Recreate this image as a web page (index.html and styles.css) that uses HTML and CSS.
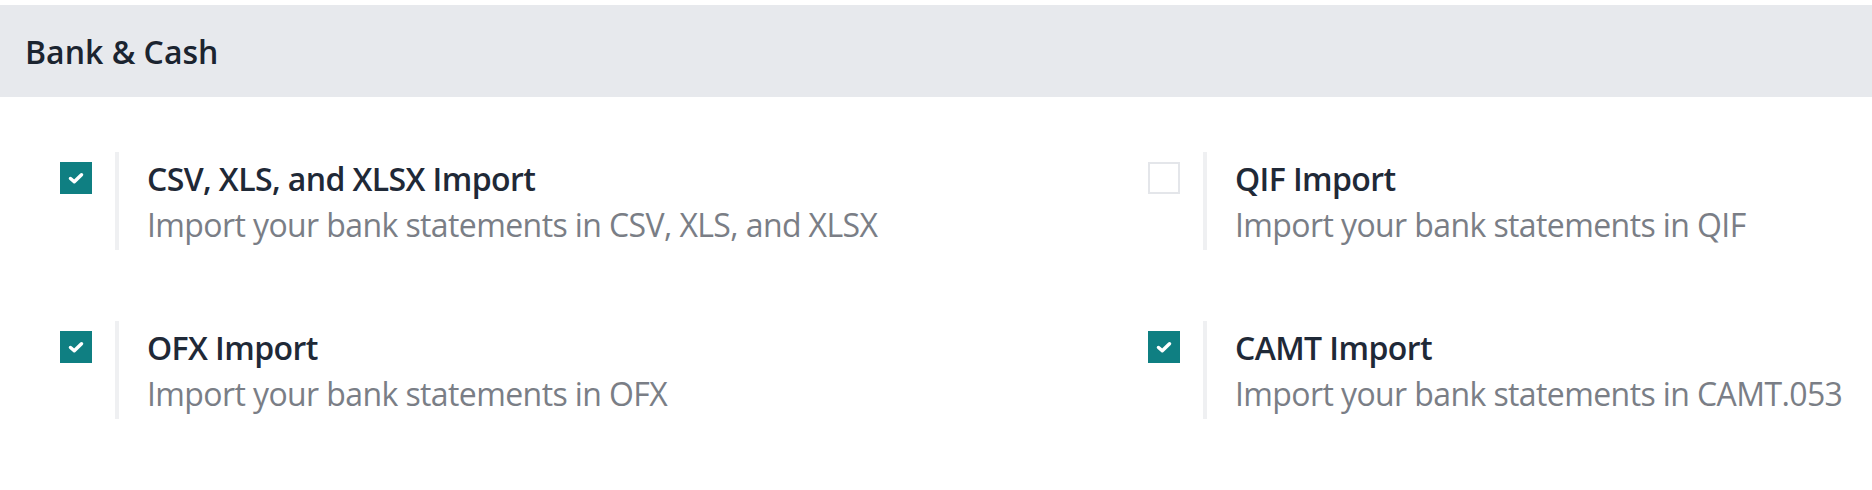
FILE: index.html
```html
<!DOCTYPE html>
<html>
<head>
<meta charset="utf-8">
<link rel="stylesheet" href="styles.css">
</head>
<body>
<div class="page">
  <div class="section-head">Bank &amp; Cash</div>
  <div class="settings">
    <div class="setting">
      <div class="box-col"><span class="box checked"><svg class="tick" viewBox="0 0 16 16"><path d="M3.6 8.4 L6.6 11 L12.4 5.4" fill="none" stroke="#fff" stroke-width="2.8" stroke-linecap="round" stroke-linejoin="round"/></svg></span></div>
      <div class="pane">
        <div class="title">CSV, XLS, and XLSX Import</div>
        <div class="desc">Import your bank statements in CSV, XLS, and XLSX</div>
      </div>
    </div>
    <div class="setting">
      <div class="box-col"><span class="box"></span></div>
      <div class="pane">
        <div class="title">QIF Import</div>
        <div class="desc">Import your bank statements in QIF</div>
      </div>
    </div>
    <div class="setting">
      <div class="box-col"><span class="box checked"><svg class="tick" viewBox="0 0 16 16"><path d="M3.6 8.4 L6.6 11 L12.4 5.4" fill="none" stroke="#fff" stroke-width="2.8" stroke-linecap="round" stroke-linejoin="round"/></svg></span></div>
      <div class="pane">
        <div class="title">OFX Import</div>
        <div class="desc">Import your bank statements in OFX</div>
      </div>
    </div>
    <div class="setting">
      <div class="box-col"><span class="box checked"><svg class="tick" viewBox="0 0 16 16"><path d="M3.6 8.4 L6.6 11 L12.4 5.4" fill="none" stroke="#fff" stroke-width="2.8" stroke-linecap="round" stroke-linejoin="round"/></svg></span></div>
      <div class="pane">
        <div class="title">CAMT Import</div>
        <div class="desc">Import your bank statements in CAMT.053</div>
      </div>
    </div>
  </div>
</div>
</body>
</html>
```
FILE: styles.css
```css
html, body {
  margin: 0;
  padding: 0;
  background: #ffffff;
}
.page {
  width: 1872px;
  height: 490px;
  overflow: hidden;
  padding-top: 5px;
  box-sizing: border-box;
  font-family: "Open Sans", "Noto Sans", sans-serif;
}
.section-head {
  height: 92px;
  background: #e7e9ed;
  display: flex;
  align-items: center;
  padding-left: 25px;
  font-size: 32px;
  font-weight: 600;
  color: #1b2430;
}
.settings {
  display: grid;
  grid-template-columns: 1088px 1088px;
  row-gap: 71px;
  padding-top: 55px;
}
.setting {
  display: flex;
  align-items: flex-start;
}
.box-col {
  width: 55px;
  padding-left: 60px;
  padding-top: 10px;
  flex: none;
}
.box {
  display: flex;
  align-items: center;
  justify-content: center;
  width: 32px;
  height: 32px;
  box-sizing: border-box;
  border: 2px solid #e4e6ea;
  background: #fff;
}
.box.checked {
  background: #0f7f82;
  border-color: #0f7f82;
}
.tick {
  width: 20px;
  height: 20px;
}
.pane {
  border-left: 4px solid #eff0f2;
  padding: 4px 0 2px 28px;
  height: 92px;
}
.title {
  font-size: 32px;
  line-height: 46px;
  font-weight: 600;
  letter-spacing: -0.6px;
  color: #1f2937;
  white-space: nowrap;
}
.desc {
  font-size: 32px;
  line-height: 46px;
  letter-spacing: -0.6px;
  color: #7a7e86;
  white-space: nowrap;
}
```
